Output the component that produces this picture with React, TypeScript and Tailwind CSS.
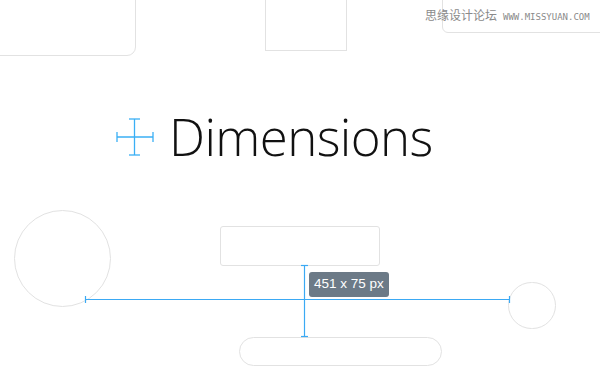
export default function App() {
  return (
    <div className="relative h-[375px] w-[600px] overflow-hidden bg-white">
      {/* ghost shapes on the canvas */}
      <div className="absolute left-[-40px] top-[-30px] h-[86px] w-[176px] rounded-[9px] border border-[#e2e2e2]" />
      <div className="absolute left-[265px] top-[-20px] h-[71px] w-[82px] border border-[#e2e2e2]" />
      <div className="absolute left-[442px] top-[-20px] h-[53px] w-[200px] rounded-[6px] border border-[#e2e2e2]" />
      <div className="absolute left-[14px] top-[210px] h-[97px] w-[97px] rounded-full border border-[#e2e2e2]" />
      <div className="absolute left-[220px] top-[226px] h-[40px] w-[160px] rounded-[3px] border border-[#e2e2e2]" />
      <div className="absolute left-[508px] top-[282px] h-[47px] w-[48px] rounded-full border border-[#e2e2e2]" />
      <div className="absolute left-[239px] top-[337px] h-[29px] w-[203px] rounded-full border border-[#e2e2e2]" />

      {/* watermark */}
      <div className="absolute left-[425px] top-[9px] flex items-baseline gap-[6px] whitespace-nowrap text-[#8a8a8a]">
        <span className="text-[12px] leading-none [font-family:'Noto_Sans_CJK_SC',sans-serif]">思缘设计论坛</span>
        <span className="text-[9px] leading-none [font-family:'DejaVu_Sans_Mono',monospace]">WWW.MISSYUAN.COM</span>
      </div>

      {/* title */}
      <div className="absolute left-[116px] top-[111px] flex items-center gap-[15px]">
        <svg width="38" height="38" viewBox="0 0 38 38" className="text-[#3aaff5]">
          <g stroke="currentColor" strokeWidth="1.3" fill="none">
            <line x1="1" y1="19" x2="37" y2="19" />
            <line x1="18.5" y1="1" x2="18.5" y2="37" />
            <line x1="1" y1="14" x2="1" y2="24" />
            <line x1="37" y1="14" x2="37" y2="24" />
            <line x1="13" y1="1" x2="24" y2="1" />
            <line x1="13" y1="37" x2="24" y2="37" />
          </g>
        </svg>
        <span className="text-[51px] font-light leading-none tracking-[-0.6px] text-[#111] [font-family:'Open_Sans',sans-serif]">
          Dimensions
        </span>
      </div>

      {/* measurement guides */}
      <svg width="600" height="375" viewBox="0 0 600 375" className="pointer-events-none absolute left-0 top-0 text-[#3ba9f4]">
        <g stroke="currentColor" strokeWidth="1.2" fill="none">
          <line x1="85" y1="299.5" x2="510" y2="299.5" />
          <line x1="85.5" y1="296" x2="85.5" y2="303" />
          <line x1="509.5" y1="296" x2="509.5" y2="303" />
          <line x1="304.5" y1="265" x2="304.5" y2="337" />
          <line x1="301" y1="265.5" x2="308" y2="265.5" />
          <line x1="301" y1="336.5" x2="308" y2="336.5" />
        </g>
      </svg>

      {/* tooltip */}
      <div className="absolute left-[309px] top-[272px] flex h-[25px] items-center rounded-[3px] bg-[#6c7a87] px-[5px] text-[13.5px] text-white [font-family:'Liberation_Sans',sans-serif]">
        451 x 75 px
      </div>
    </div>
  )
}
